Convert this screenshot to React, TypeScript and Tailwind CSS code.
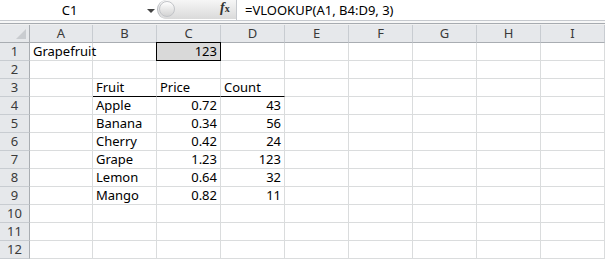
import React from "react";

const cols = ["A", "B", "C", "D", "E", "F", "G", "H", "I"];
const colW = [63, 64, 64, 64, 64, 64, 64, 64, 64];

type Cell = { v: string; right?: boolean };
const data: Record<number, Record<number, Cell>> = {
  1: { 0: { v: "Grapefruit" }, 2: { v: "123", right: true } },
  3: { 1: { v: "Fruit" }, 2: { v: "Price" }, 3: { v: "Count" } },
  4: { 1: { v: "Apple" }, 2: { v: "0.72", right: true }, 3: { v: "43", right: true } },
  5: { 1: { v: "Banana" }, 2: { v: "0.34", right: true }, 3: { v: "56", right: true } },
  6: { 1: { v: "Cherry" }, 2: { v: "0.42", right: true }, 3: { v: "24", right: true } },
  7: { 1: { v: "Grape" }, 2: { v: "1.23", right: true }, 3: { v: "123", right: true } },
  8: { 1: { v: "Lemon" }, 2: { v: "0.64", right: true }, 3: { v: "32", right: true } },
  9: { 1: { v: "Mango" }, 2: { v: "0.82", right: true }, 3: { v: "11", right: true } },
};

export default function App() {
  const rows = Array.from({ length: 12 }, (_, i) => i + 1);
  return (
    <div
      className="w-[605px] h-[259px] bg-white overflow-hidden text-[12px] text-black"
      style={{ fontFamily: '"Noto Sans", "Liberation Sans", sans-serif' }}
    >
      {/* formula bar */}
      <div className="flex h-[21px] border-b border-[#c6c9ce] bg-white">
        <div className="w-[157px] flex items-center relative">
          <div className="flex-1 text-center text-[13px] leading-none pr-[18px] pt-[1px]">C1</div>
          <div className="absolute left-[147px] top-[9px] w-0 h-0 border-l-[4px] border-r-[4px] border-t-[4px] border-l-transparent border-r-transparent border-t-[#444]" />
        </div>
        <div className="w-[79px] h-[19px] flex items-center relative rounded-l-full bg-gradient-to-b from-[#f6f6f6] to-[#dadada] border-l border-[#b9bcc1]">
          <div className="absolute left-[1px] top-[1px] w-[16px] h-[16px] rounded-full bg-gradient-to-b from-[#ffffff] to-[#d3d3d3] border border-[#c2c4c8]" />
          <div
            className="absolute left-[62px] top-[1px] text-[14px] italic font-bold text-[#333] leading-none"
            style={{ fontFamily: '"Liberation Serif", serif' }}
          >
            f<span className="text-[10px] not-italic font-bold">x</span>
          </div>
        </div>
        <div className="w-px h-[21px] bg-[#c6c9ce]" />
        <div className="flex-1 flex items-center pl-[8px] text-[13px] leading-none pt-[1px]">
          =VLOOKUP(A1, B4:D9, 3)
        </div>
      </div>
      <div className="h-[2px] bg-[#f7f7f7]" />
      <div className="h-px bg-[#a7abb0]" />
      <div className="h-px bg-[#f0f0f0]" />

      {/* sheet */}
      <div className="grid grid-cols-[30px_63px_repeat(8,64px)] grid-rows-[18px_repeat(12,18px)]">
        {/* corner */}
        <div className="relative bg-[#e6e8eb] border-r border-b border-[#a9adb2]">
          <div className="absolute right-[3px] bottom-[3px] w-0 h-0 border-l-[10px] border-t-[10px] border-l-transparent border-t-transparent border-r-0 border-b-[0px]" />
          <div
            className="absolute right-[3px] bottom-[3px] w-[10px] h-[10px] bg-[#c9ccd0]"
            style={{ clipPath: "polygon(100% 0, 100% 100%, 0 100%)" }}
          />
        </div>
        {cols.map((c, i) => (
          <div
            key={c}
            className={`flex items-center justify-center bg-[#e6e8eb] border-b border-[#a9adb2] text-[13px] text-[#3a3a3a] ${i === 8 ? "border-r border-r-[#c8ccd1]" : "border-r border-r-[#c8ccd1]"}`}
            style={{ width: colW[i] }}
          >
            {c}
          </div>
        ))}
        {rows.map((r) => (
          <React.Fragment key={r}>
            <div className="flex items-center justify-center bg-[#e6e8eb] border-r border-[#a9adb2] border-b border-b-[#c8ccd1] text-[13px] text-[#3a3a3a]">
              {r}
            </div>
            {cols.map((c, ci) => {
              const cell = data[r]?.[ci];
              const isSel = r === 1 && ci === 2;
              const hdr = r === 3 && ci >= 1 && ci <= 3;
              return (
                <div
                  key={c}
                  className={`relative flex items-end px-[3px] pb-[1px] leading-[16px] text-[13px] border-r border-r-[#dadcdd] border-b ${hdr ? "border-b-black" : "border-b-[#dadcdd]"} ${cell?.right ? "justify-end" : "justify-start"} ${isSel ? "bg-[#d9d9d9]" : ""}`}
                >
                  {isSel && (
                    <div className="absolute left-[-1px] top-[-1px] right-[-1px] bottom-[-1px] border border-black" />
                  )}
                  <span className="relative whitespace-nowrap">{cell?.v}</span>
                </div>
              );
            })}
          </React.Fragment>
        ))}
      </div>
    </div>
  );
}
